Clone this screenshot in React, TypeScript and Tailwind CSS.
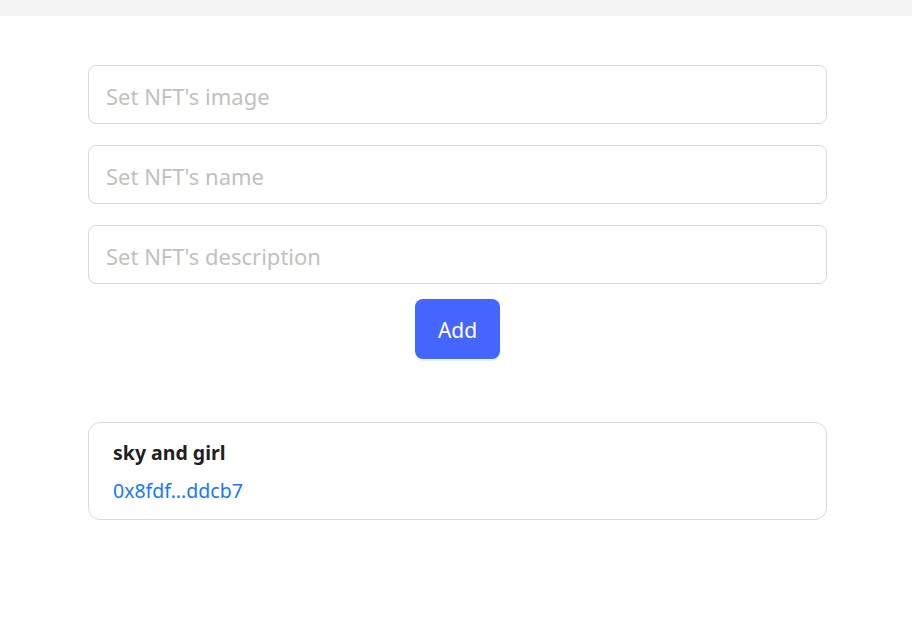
export default function App() {
  return (
    <div className="min-h-[628px] bg-white font-['Noto_Sans',sans-serif]">
      <div className="h-4 bg-[#f4f4f4]"></div>

      <main className="ml-[88px] w-[739px] pt-[49px]">
        <div className="flex flex-col gap-[21px]">
          {["Set NFT's image", "Set NFT's name", "Set NFT's description"].map(
            (p) => (
              <input
                key={p}
                placeholder={p}
                className="h-[59px] w-full rounded-lg border border-[#d9d9d9] px-[17px] pt-[3px] text-[22px] text-[#222] outline-none placeholder:text-[#c4c0bc]"
              />
            )
          )}
        </div>

        <div className="mt-[15px] flex justify-center">
          <button className="h-[60px] w-[85px] rounded-lg bg-[#4466ff] pt-[3px] text-[21px] text-white shadow-[0_2px_0_rgba(5,145,255,0.1)]">
            Add
          </button>
        </div>

        <div className="mt-[63px] h-[98px] rounded-xl border border-[#d9d9d9] px-6 pt-[16px]">
          <h3 className="text-[19.5px] font-bold leading-[28px] text-[#1f1f1f]">
            sky and girl
          </h3>
          <a className="mt-[10px] block text-[19.5px] leading-[28px] text-[#1677ff]">
            0x8fdf...ddcb7
          </a>
        </div>
      </main>
    </div>
  );
}
